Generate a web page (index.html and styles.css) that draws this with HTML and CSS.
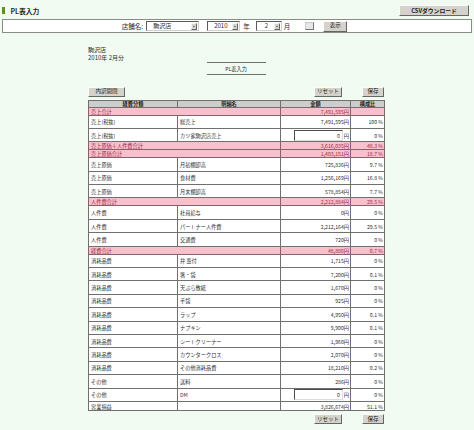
FILE: index.html
```html
<!DOCTYPE html>
<html lang="ja">
<head>
<meta charset="utf-8">
<title>PL表入力</title>
<link rel="stylesheet" href="styles.css">
</head>
<body>
<header class="top">
  <h1 class="title"><span class="title-bar"></span>PL表入力</h1>
  <button class="btn btn-csv" type="button">CSVダウンロード</button>
</header>

<form class="search">
  <span class="lbl lbl-store">店舗名:</span>
  <span class="select sel-store"><span class="sel-text">駒沢店</span><span class="arrow"></span></span>
  <span class="select sel-year"><span class="sel-text">2010</span><span class="arrow"></span></span>
  <span class="lbl lbl-year">年</span>
  <span class="select sel-month"><span class="sel-text">2</span><span class="arrow"></span></span>
  <span class="lbl lbl-month">月</span>
  <span class="cal"></span>
  <button class="btn btn-show" type="button">表示</button>
</form>

<main class="content">
  <div class="info">
    <p>駒沢店</p>
    <p>2010年 2月分</p>
  </div>
  <div class="caption">PL表入力</div>

  <div class="actions">
    <button class="btn btn-toggle" type="button">内訳開閉</button>
    <div class="actions-right">
      <button class="btn btn-reset" type="button">リセット</button>
      <button class="btn btn-save" type="button">保存</button>
    </div>
  </div>

  <table class="pl">
    <colgroup>
      <col class="c1"><col class="c2"><col class="c3"><col class="c4">
    </colgroup>
    <thead>
      <tr><th>経費分類</th><th>明細名</th><th>金額</th><th>構成比</th></tr>
    </thead>
    <tbody>
      <tr class="sum"><td colspan="2">売上合計</td><td class="num">7,491,595円</td><td class="num"></td></tr>
      <tr class="row"><td>売上(税抜)</td><td>総売上</td><td class="num">7,491,595円</td><td class="num">100 %</td></tr>
      <tr class="row"><td>売上(税抜)</td><td>カツ家駒沢店売上</td><td class="num"><span class="inp">0</span><span class="yen">円</span></td><td class="num">0 %</td></tr>
      <tr class="sum"><td colspan="2">売上原価＋人件費合計</td><td class="num">3,616,035円</td><td class="num">48.3 %</td></tr>
      <tr class="sum"><td colspan="2">売上原価合計</td><td class="num">1,403,151円</td><td class="num">18.7 %</td></tr>
      <tr class="row"><td>売上原価</td><td>月初棚卸高</td><td class="num">725,836円</td><td class="num">9.7 %</td></tr>
      <tr class="row"><td>売上原価</td><td>食材費</td><td class="num">1,256,169円</td><td class="num">16.8 %</td></tr>
      <tr class="row"><td>売上原価</td><td>月末棚卸高</td><td class="num">578,854円</td><td class="num">7.7 %</td></tr>
      <tr class="sum"><td colspan="2">人件費合計</td><td class="num">2,212,884円</td><td class="num">29.5 %</td></tr>
      <tr class="row"><td>人件費</td><td>社員給与</td><td class="num">0円</td><td class="num">0 %</td></tr>
      <tr class="row"><td>人件費</td><td>パートナー人件費</td><td class="num">2,212,164円</td><td class="num">29.5 %</td></tr>
      <tr class="row"><td>人件費</td><td>交通費</td><td class="num">720円</td><td class="num">0 %</td></tr>
      <tr class="sum"><td colspan="2">経費合計</td><td class="num">48,886円</td><td class="num">0.7 %</td></tr>
      <tr class="row"><td>消耗品費</td><td>弁 蓋付</td><td class="num">1,715円</td><td class="num">0 %</td></tr>
      <tr class="row"><td>消耗品費</td><td>箸・袋</td><td class="num">7,200円</td><td class="num">0.1 %</td></tr>
      <tr class="row"><td>消耗品費</td><td>天ぷら敷紙</td><td class="num">1,670円</td><td class="num">0 %</td></tr>
      <tr class="row"><td>消耗品費</td><td>手袋</td><td class="num">925円</td><td class="num">0 %</td></tr>
      <tr class="row"><td>消耗品費</td><td>ラップ</td><td class="num">4,950円</td><td class="num">0.1 %</td></tr>
      <tr class="row"><td>消耗品費</td><td>ナプキン</td><td class="num">9,900円</td><td class="num">0.1 %</td></tr>
      <tr class="row"><td>消耗品費</td><td>シートクリーナー</td><td class="num">1,960円</td><td class="num">0 %</td></tr>
      <tr class="row"><td>消耗品費</td><td>カウンタークロス</td><td class="num">2,070円</td><td class="num">0 %</td></tr>
      <tr class="row"><td>消耗品費</td><td>その他消耗品費</td><td class="num">18,210円</td><td class="num">0.2 %</td></tr>
      <tr class="row"><td>その他</td><td>送料</td><td class="num">286円</td><td class="num">0 %</td></tr>
      <tr class="row"><td>その他</td><td>DM</td><td class="num"><span class="inp">0</span><span class="yen">円</span></td><td class="num">0 %</td></tr>
      <tr class="total"><td>営業損益</td><td></td><td class="num">3,826,674円</td><td class="num">51.1 %</td></tr>
    </tbody>
  </table>

  <div class="actions actions-bottom">
    <div class="actions-right">
      <button class="btn btn-reset" type="button">リセット</button>
      <button class="btn btn-save" type="button">保存</button>
    </div>
  </div>
</main>
</body>
</html>
```

FILE: styles.css
```css
* { box-sizing: border-box; }

body {
  margin: 0;
  background: #f1fbf1;
  font-family: "Noto Sans CJK JP", "Liberation Sans", sans-serif;
  color: #333;
}

/* header */
.top {
  display: flex;
  justify-content: space-between;
  align-items: center;
  height: 11px;
  margin-top: 5px;
  padding: 0 5px 0 2px;
}
.title {
  margin: 0;
  display: flex;
  align-items: center;
  gap: 6px;
  font-size: 6.8px;
  line-height: 8px;
  font-weight: bold;
  color: #2a2a2a;
}
.title-bar {
  width: 2.5px;
  height: 7px;
  background: #5e8f2c;
}

/* buttons */
.btn {
  display: inline-flex;
  align-items: center;
  justify-content: center;
  padding: 0;
  font-family: inherit;
  font-size: 5.5px;
  line-height: 1;
  color: #222;
  background: #d5d2cb;
  border: 1px solid;
  border-color: #fbfbfb #666 #666 #fbfbfb;
}
.btn-csv { width: 70px; height: 11px; font-weight: bold; font-size: 5.8px; }
.btn-show { width: 24px; height: 11px; margin-left: 9px; }
.btn-toggle { width: 37px; height: 10px; }
.btn-reset { width: 28px; height: 10px; }
.btn-save { width: 22px; height: 10px; }

/* search bar */
.search {
  margin: 3px 2px 0;
  height: 14px;
  background: #fff;
  border: 1px solid #8a8a8a;
  display: flex;
  align-items: center;
  justify-content: center;
  padding-right: 5px;
  font-size: 6.5px;
  color: #2a2a2a;
}
.lbl { line-height: 8px; }
.lbl-year { margin: 0 6px 0 3px; }
.lbl-month { margin-left: 2px; }
.select {
  display: inline-flex;
  align-items: center;
  height: 10px;
  background: #fff;
  border: 1px solid;
  border-color: #5a5a5a #cfcfcf #cfcfcf #5a5a5a;
  padding: 0 1px 0 6px;
  font-size: 6px;
}
.sel-text { flex: 1; line-height: 8px; }
.sel-store { width: 53px; margin-left: 3px; }
.sel-year { width: 33px; margin-left: 8px; }
.sel-month { width: 26px; padding-left: 8px; }
.arrow {
  width: 6px;
  height: 7px;
  background: #d5d2cb;
  border: 1px solid;
  border-color: #f4f4f4 #666 #666 #f4f4f4;
  display: flex;
  align-items: center;
  justify-content: center;
}
.arrow::after {
  content: "";
  border-left: 1.5px solid transparent;
  border-right: 1.5px solid transparent;
  border-top: 1.5px solid #222;
}
.cal {
  width: 9px;
  height: 8px;
  margin-left: 15px;
  background: #e6e6e6;
  border: 1px solid;
  border-color: #c8c8c8 #777 #777 #c8c8c8;
}

/* content */
.content {
  width: 296px;
  margin-left: 88px;
}
.info {
  margin-top: 13px;
  font-size: 6px;
  line-height: 8px;
  color: #2e2e2e;
}
.info p { margin: 0; }
.caption {
  width: 59px;
  height: 13px;
  margin: 0 auto;
  border-top: 1px solid #707070;
  border-bottom: 1px solid #707070;
  font-size: 5.2px;
  line-height: 11px;
  text-align: center;
  color: #2e2e2e;
}
.actions {
  margin-top: 12px;
  height: 10px;
  display: flex;
  justify-content: space-between;
}
.actions-right {
  display: flex;
  gap: 20px;
  margin-left: auto;
}
.actions-bottom { margin-top: 3px; }

/* table */
.pl {
  margin-top: 3px;
  width: 296px;
  table-layout: fixed;
  border-collapse: collapse;
  background: #fff;
  font-size: 5.2px;
  line-height: 5px;
  color: #2e2e2e;
}
.c1 { width: 89px; }
.c2 { width: 103px; }
.c3 { width: 70px; }
.c4 { width: 34px; }
.pl th, .pl td {
  border: 1px solid #707070;
  padding: 0 2px;
  white-space: nowrap;
  overflow: hidden;
}
.pl th {
  height: 6.5px;
  background: #cdcdcd;
  font-weight: bold;
  color: #222;
  text-align: center;
}
.pl tr.row td { height: 13.4px; }
.pl tr.sum td {
  height: 8px;
  background: #f8c0cc;
  color: #9e2c48;
  border-color: #86636b;
}
.pl tr.total td { height: 9.5px; }
.pl td.num { text-align: right; padding-right: 1px; }
.inp {
  display: inline-block;
  width: 49px;
  height: 11px;
  vertical-align: middle;
  border: 1px solid;
  border-color: #4c4c4c #dcdcdc #dcdcdc #4c4c4c;
  background: #fff;
  padding-right: 2px;
  line-height: 9px;
  text-align: right;
}
.yen { display: inline-block; margin-left: 1px; vertical-align: middle; }
```
